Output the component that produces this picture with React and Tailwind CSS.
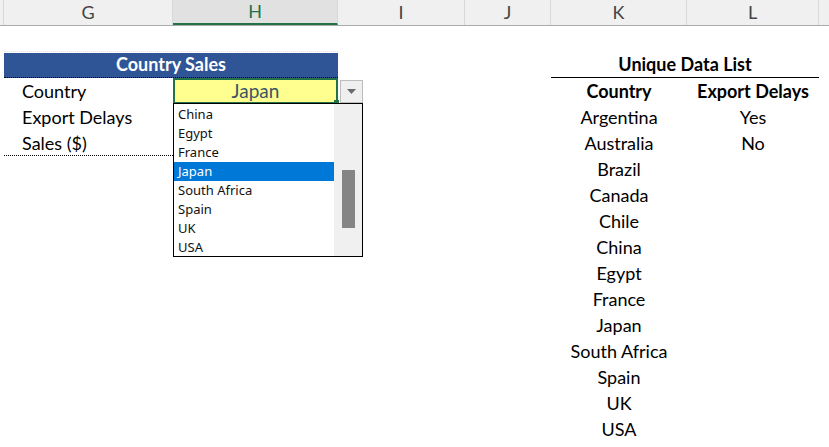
import React from 'react'

const cols = [
  { name: '', w: 'w-[4px]' },
  { name: 'G', w: 'w-[169px]' },
  { name: 'H', w: 'w-[165px]', active: true },
  { name: 'I', w: 'w-[127px]' },
  { name: 'J', w: 'w-[86px]' },
  { name: 'K', w: 'w-[136px]' },
  { name: 'L', w: 'w-[132px]' },
]

const countries = ['Argentina', 'Australia', 'Brazil', 'Canada', 'Chile', 'China', 'Egypt', 'France', 'Japan', 'South Africa', 'Spain', 'UK', 'USA']
const delays = ['Yes', 'No']
const listItems = ['China', 'Egypt', 'France', 'Japan', 'South Africa', 'Spain', 'UK', 'USA']

function Header() {
  return (
    <div className="flex h-[26px] bg-[#f0f0f0] border-b border-[#ababab] text-[18px] text-[#444]">
      {cols.map((c, i) => (
        <div
          key={i}
          className={`${c.w} flex items-center justify-center border-r border-[#d8d8d8] ${c.active ? 'bg-[#e1e1e1] text-[#217346] border-b-2 border-b-[#217346]' : ''}`}
        >
          {c.name}
        </div>
      ))}
      <div className="flex-1" />
    </div>
  )
}

function Dropdown() {
  return (
    <>
      <div className="absolute left-[340px] top-[80px] w-[23px] h-[23px] bg-[#efefef] border border-[#bdbdbd] flex items-center justify-center">
        <svg width="9" height="5" viewBox="0 0 9 5"><path d="M0 0h9L4.5 5z" fill="#6a6a6a" /></svg>
      </div>
      <div className="absolute left-[173px] top-[103px] w-[190px] h-[154px] bg-white border border-black flex font-['Noto_Sans',sans-serif] text-[13px] text-[#111]">
        <div className="flex-1 flex flex-col pt-[1px]">
          {listItems.map((it) => (
            <div
              key={it}
              className={`h-[19px] leading-[19px] pl-[4px] ${it === 'Japan' ? 'bg-[#0078d7] text-white' : ''}`}
            >
              {it}
            </div>
          ))}
        </div>
        <div className="w-[28px] bg-[#f0f0f0] flex justify-center pt-[66px]">
          <div className="w-[13px] h-[58px] bg-[#858585]" />
        </div>
      </div>
    </>
  )
}

export default function App() {
  return (
    <div className="relative w-[829px] h-[447px] bg-white overflow-hidden font-['Lato',sans-serif] text-[18px] text-black">
      <Header />
      <div className="flex">
        {/* left block */}
        <div className="w-[338px] flex flex-col pl-[4px]">
          <div className="h-[26px] border-b border-dotted border-[#e4e4e4]" />
          <div className="h-[26px] flex items-center">
            <div className="w-full h-[25px] bg-[#2f5597] text-white font-bold flex items-center justify-center border-b border-dotted border-black">
              Country Sales
            </div>
          </div>
          <div className="h-[26px] flex">
            <div className="w-[169px] pl-[18px] leading-[26px]">Country</div>
            <div className="w-[165px] h-[26px] bg-[#ffff8f] border-2 border-[#217346] flex items-center justify-center text-[19px] text-[#3b5566] relative">
              Japan
              <div className="absolute right-[-3px] bottom-[-3px] w-[5px] h-[5px] bg-[#217346]" />
            </div>
          </div>
          <div className="h-[26px] w-[169px] pl-[18px] leading-[26px]">Export Delays</div>
          <div className="h-[26px] w-[169px] pl-[18px] leading-[26px] border-b border-dotted border-black">Sales ($)</div>
        </div>

        <div className="w-[213px]" />

        {/* unique data list */}
        <div className="w-[268px] flex flex-col">
          <div className="h-[26px]" />
          <div className="h-[26px] flex items-center justify-center font-bold border-b border-black">Unique Data List</div>
          <div className="flex">
            <div className="w-[136px] flex flex-col items-center">
              <div className="h-[26px] leading-[26px] font-bold">Country</div>
              {countries.map((c) => (
                <div key={c} className="h-[26px] leading-[26px]">{c}</div>
              ))}
            </div>
            <div className="w-[132px] flex flex-col items-center">
              <div className="h-[26px] leading-[26px] font-bold">Export Delays</div>
              {delays.map((d) => (
                <div key={d} className="h-[26px] leading-[26px]">{d}</div>
              ))}
            </div>
          </div>
        </div>
      </div>
      <Dropdown />
    </div>
  )
}
